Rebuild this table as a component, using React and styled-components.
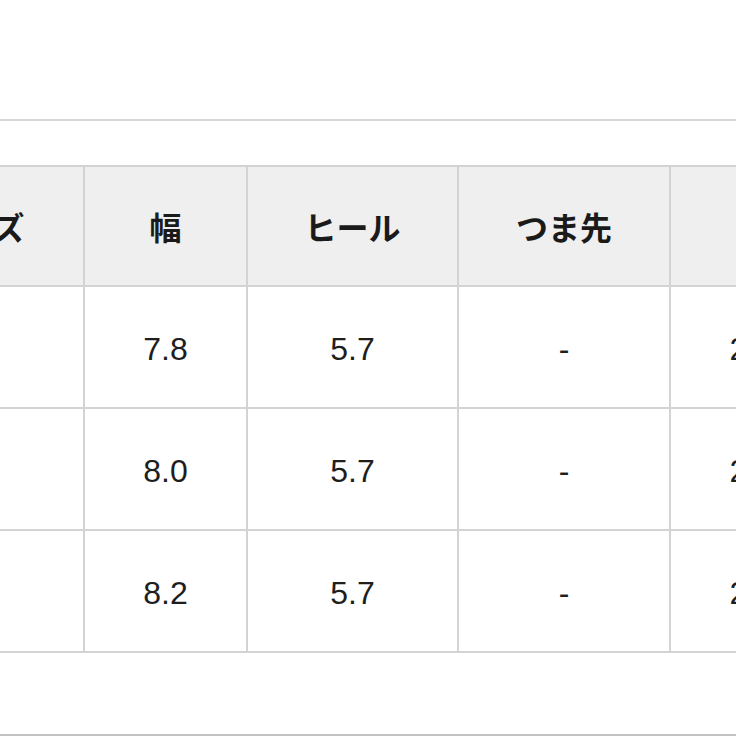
import React from "react";
import styled, { createGlobalStyle } from "styled-components";

const GlobalStyle = createGlobalStyle`
  html, body {
    margin: 0;
    padding: 0;
    background: #fff;
  }
  body {
    font-family: "Liberation Sans", "Noto Sans CJK JP", sans-serif;
    color: #1e1e1e;
  }
`;

const Page = styled.div`
  width: 736px;
  height: 736px;
  overflow: hidden;
  display: flex;
  flex-direction: column;
  background: #fff;
`;

const Header = styled.div`
  height: 119px;
  flex-shrink: 0;
`;

const Rule = styled.div`
  height: 2px;
  flex-shrink: 0;
  background: ${(p) => p.color || "#d6d6d6"};
`;

const Spacer = styled.div`
  height: ${(p) => p.h}px;
  flex-shrink: 0;
`;

const SizeGrid = styled.div`
  display: grid;
  grid-template-columns: 212px 161px 209px 210px 260px;
  grid-auto-rows: 120px;
  grid-template-rows: 118px;
  gap: 2px;
  padding: 2px;
  background: #d3d3d3;
  width: max-content;
  margin-left: -131px;
  flex-shrink: 0;
`;

const HeadCell = styled.div`
  display: flex;
  align-items: center;
  justify-content: center;
  background: #efefef;
  font-family: "Noto Sans CJK JP", sans-serif;
  font-weight: 700;
  font-size: 32px;
  color: #1a1a1a;
  white-space: nowrap;
`;

const Cell = styled.div`
  display: flex;
  align-items: center;
  justify-content: center;
  background: #fff;
  font-family: "Liberation Sans", Arial, sans-serif;
  font-size: 32px;
  color: #1e1e1e;
  white-space: nowrap;
  padding-top: 4px;
  box-sizing: border-box;
`;

const columns = ["サイズ", "幅", "ヒール", "つま先", "足長"];

const rows = [
  ["S", "7.8", "5.7", "-", "22.5~23.0"],
  ["M", "8.0", "5.7", "-", "23.5~24.0"],
  ["L", "8.2", "5.7", "-", "24.5~25.0"],
];

export default function App() {
  return (
    <>
      <GlobalStyle />
      <Page>
        <Header />
        <Rule />
        <Spacer h={44} />
        <SizeGrid>
          {columns.map((c) => (
            <HeadCell key={c}>{c}</HeadCell>
          ))}
          {rows.map((r, i) =>
            r.map((v, j) => <Cell key={i + "-" + j}>{v}</Cell>)
          )}
        </SizeGrid>
        <Spacer h={81} />
        <Rule color="#c2c2c2" />
      </Page>
    </>
  );
}
